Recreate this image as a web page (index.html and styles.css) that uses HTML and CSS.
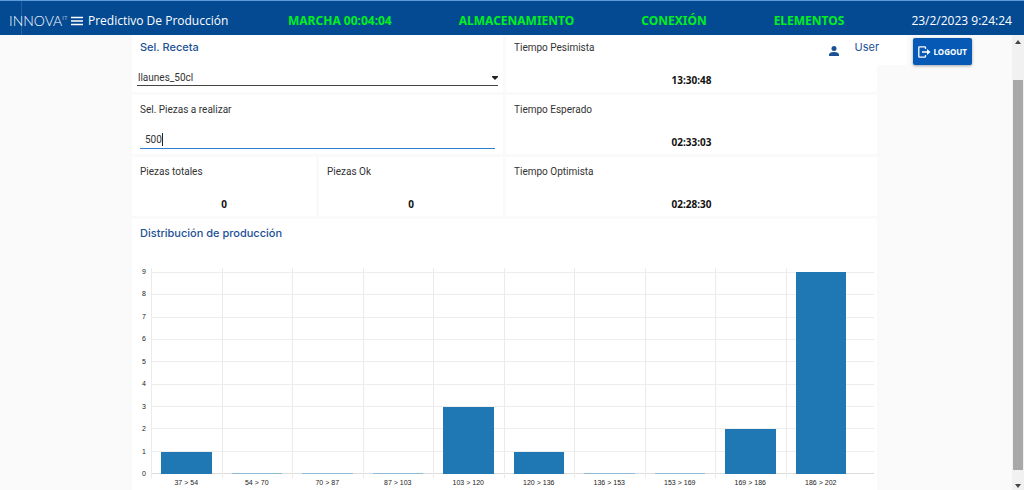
FILE: index.html
```html
<!DOCTYPE html>
<html lang="es">
<head>
<meta charset="utf-8">
<meta name="viewport" content="width=device-width, initial-scale=1">
<title>Predictivo De Producción</title>
<link rel="stylesheet" href="styles.css">
</head>
<body>
<header class="topbar">
  <div class="brand">
    <span class="logo">INNOVA<sup class="logo-sup">IT</sup></span>
    <button class="menu-button" type="button" aria-label="Menú">
      <svg class="menu-icon" viewBox="0 0 12 10" aria-hidden="true"><path d="M0 1.5H12M0 5H12M0 8.5H12" stroke="currentColor" stroke-width="1.3"/></svg>
    </button>
    <h1 class="app-title">Predictivo De Producción</h1>
  </div>
  <span class="status">MARCHA 00:04:04</span>
  <span class="status">ALMACENAMIENTO</span>
  <span class="status">CONEXIÓN</span>
  <span class="status">ELEMENTOS</span>
  <time class="clock">23/2/2023 9:24:24</time>
</header>
<div class="page">
  <main class="content">
    <div class="cards">
      <section class="card card-wide">
        <label class="heading" for="recipe">Sel. Receta</label>
        <div class="select-wrap">
          <select class="recipe" id="recipe"><option>llaunes_50cl</option></select>
          <svg class="select-arrow" viewBox="0 0 6 4" aria-hidden="true"><path d="M0 0H6V1L3 4L0 1Z"/></svg>
        </div>
      </section>
      <section class="card card-wide">
        <h2 class="label">Tiempo Pesimista</h2>
        <p class="value">13:30:48</p>
      </section>
      <section class="card card-wide">
        <label class="label" for="pieces">Sel. Piezas a realizar</label>
        <div class="input-wrap">
          <input class="pieces" id="pieces" type="text" value="500">
          <span class="caret"></span>
        </div>
      </section>
      <section class="card card-wide">
        <h2 class="label">Tiempo Esperado</h2>
        <p class="value">02:33:03</p>
      </section>
      <section class="card">
        <h2 class="label">Piezas totales</h2>
        <p class="value">0</p>
      </section>
      <section class="card">
        <h2 class="label">Piezas Ok</h2>
        <p class="value">0</p>
      </section>
      <section class="card card-wide">
        <h2 class="label">Tiempo Optimista</h2>
        <p class="value">02:28:30</p>
      </section>
      <section class="card card-full">
        <h2 class="heading">Distribución de producción</h2>
        <div class="chart">
          <div class="y-axis">
            <span>9</span><span>8</span><span>7</span><span>6</span><span>5</span><span>4</span><span>3</span><span>2</span><span>1</span><span>0</span>
          </div>
          <div class="rows">
            <i></i><i></i><i></i><i></i><i></i><i></i><i></i><i></i><i></i>
          </div>
          <div class="columns">
            <div class="column"><div class="bar" style="height:11.11%"></div></div>
            <div class="column"><div class="bar"></div></div>
            <div class="column"><div class="bar"></div></div>
            <div class="column"><div class="bar"></div></div>
            <div class="column"><div class="bar" style="height:33.33%"></div></div>
            <div class="column"><div class="bar" style="height:11.11%"></div></div>
            <div class="column"><div class="bar"></div></div>
            <div class="column"><div class="bar"></div></div>
            <div class="column"><div class="bar" style="height:22.22%"></div></div>
            <div class="column"><div class="bar" style="height:100%"></div></div>
          </div>
          <div class="x-axis">
            <span>37 &gt; 54</span><span>54 &gt; 70</span><span>70 &gt; 87</span><span>87 &gt; 103</span><span>103 &gt; 120</span><span>120 &gt; 136</span><span>136 &gt; 153</span><span>153 &gt; 169</span><span>169 &gt; 186</span><span>186 &gt; 202</span>
          </div>
        </div>
      </section>
    </div>
    <div class="account">
      <div class="user">
        <svg class="user-icon" viewBox="0 0 10 10" aria-hidden="true"><circle cx="5" cy="2.5" r="2.5"/><path d="M0 10V8.5C0 6.8 3 6 5 6S10 6.800 10 8.500V10Z"/></svg>
        <span class="user-name">User</span>
      </div>
      <button class="logout" type="button">
        <svg class="logout-icon" viewBox="0 0 13 12" aria-hidden="true"><path d="M7.500 3V1.600Q7.500 .8 6.700 .8H1.600Q.8 .8 .8 1.600V10.400Q.8 11.200 1.600 11.200H6.700Q7.500 11.200 7.500 10.400V9M4 6H10.500" fill="none" stroke="currentColor" stroke-width="1.3"/><path d="M9 3L12.500 6L9 9Z" fill="currentColor"/></svg>
        <span>LOGOUT</span>
      </button>
    </div>
  </main>
  <div class="scrollbar" aria-hidden="true">
    <svg class="scroll-arrow" viewBox="0 0 6 4"><path d="M0 4L3 0L6 4Z"/></svg>
    <div class="scroll-track"><div class="scroll-thumb"></div></div>
    <svg class="scroll-arrow" viewBox="0 0 6 4"><path d="M0 0L3 4L6 0Z"/></svg>
  </div>
</div>
</body>
</html>
```
FILE: styles.css
```css
* {
  box-sizing: border-box;
}

body {
  margin: 0;
  height: 100vh;
  display: flex;
  flex-direction: column;
  overflow: hidden;
  background: #fafafa;
  color: #333;
  font-family: "Noto Sans", "Open Sans", sans-serif;
  font-size: 10px;
}

h1,
h2,
p {
  margin: 0;
}

button,
input,
select {
  font: inherit;
  color: inherit;
}

.topbar {
  flex: none;
  height: 35px;
  padding: 5px 12px 0 9px;
  display: flex;
  align-items: center;
  justify-content: space-between;
  border-top: 1px solid #5b9bdc;
  background: linear-gradient(90deg, transparent 21px, #2560a3 21px, #2560a3 22px, transparent 22px) #034a93;
  color: #fff;
  white-space: nowrap;
}

.brand {
  flex: none;
  display: flex;
  align-items: center;
  width: 212px;
}

.logo {
  flex: none;
  width: 62px;
  font-family: Lato, sans-serif;
  font-size: 14px;
  font-weight: 300;
  line-height: 16px;
}

.logo-sup {
  font-size: 6px;
  line-height: 1;
}

.menu-button {
  display: flex;
  margin-right: 5px;
  padding: 0;
  border: 0;
  background: none;
}

.menu-icon {
  width: 12px;
  height: 10px;
}

.app-title {
  font-family: "Open Sans", sans-serif;
  font-size: 12px;
  font-weight: 400;
}

.status {
  color: #00f01e;
  font-size: 12px;
  font-weight: 700;
}

.clock {
  font-family: "Open Sans", sans-serif;
  font-size: 12px;
}

.page {
  flex: 1;
  min-height: 0;
  display: flex;
}

.content {
  position: relative;
  flex: 1;
  min-width: 0;
  overflow: hidden;
  padding: 0 135px 0 132px;
}

.cards {
  display: grid;
  grid-template-columns: repeat(4, 1fr);
  gap: 3px;
}

.card {
  height: 59px;
  padding: 8px 8px 0;
  background: #fff;
}

.card-wide {
  grid-column: span 2;
}

.card-wide:nth-child(-n+2) {
  height: 57px;
  padding-top: 6px;
}

.card-full {
  grid-column: 1 / -1;
  height: auto;
  padding: 6px 3px 10px 8px;
}

.label {
  display: block;
  font-family: Roboto, sans-serif;
  font-size: 10px;
  font-weight: 400;
  line-height: 14px;
}

.heading {
  display: block;
  color: #1c5196;
  font-family: Inter, sans-serif;
  font-size: 11px;
  font-weight: 500;
  line-height: 16px;
}

.card-wide .heading {
  line-height: 12px;
}

.value {
  margin-top: 18px;
  color: #111;
  font-size: 10px;
  font-weight: 700;
  line-height: 14px;
  text-align: center;
}

.select-wrap {
  display: grid;
  align-items: center;
  margin: 17px -3px 0;
  border-bottom: 1px solid #444;
}

.recipe,
.select-arrow {
  grid-area: 1 / 1;
}

.recipe {
  height: 15px;
  padding: 0 1px;
  border: 0;
  outline: 0;
  background: none;
  appearance: none;
  font-family: Roboto, sans-serif;
  font-size: 10px;
}

.select-arrow {
  justify-self: end;
  width: 6px;
  height: 4px;
  fill: #222;
}

.input-wrap {
  position: relative;
  margin-top: 13px;
}

.pieces {
  display: block;
  width: 100%;
  height: 19px;
  padding: 0 5px;
  border: 0;
  border-bottom: 1px solid #2f7fd0;
  outline: 0;
  background: none;
  font-family: Roboto, sans-serif;
  font-size: 10px;
}

.caret {
  position: absolute;
  left: 22px;
  top: 3px;
  width: 1px;
  height: 13px;
  background: #222;
}

.chart {
  display: grid;
  grid-template-columns: 11px 1fr;
  grid-template-rows: 202px auto;
  margin-top: 31px;
  color: #222;
  font-family: "Liberation Sans", Arial, sans-serif;
  font-size: 7px;
  line-height: 8px;
}

.y-axis {
  display: flex;
  flex-direction: column;
  justify-content: space-between;
  margin: -4px 5px -4px 0;
  text-align: right;
}

.rows {
  grid-area: 1 / 2;
  display: grid;
  grid-template-rows: repeat(9, 1fr);
  border-bottom: 1px solid #ddd;
}

.rows i {
  border-top: 1px solid #ededed;
}

.columns {
  grid-area: 1 / 2;
  display: grid;
  grid-template-columns: repeat(10, 1fr);
  margin: -4px 0 -4px;
  padding-right: 18px;
}

.column {
  display: flex;
  align-items: flex-end;
  padding: 4px 10px 4px 9px;
  border-left: 1px solid #ebebeb;
}

.bar {
  width: 100%;
  height: 1px;
  background: #1f77b4;
}

.bar:not([style]) {
  background: #8fbbdb;
}

.x-axis {
  grid-area: 2 / 2;
  display: grid;
  grid-template-columns: repeat(10, 1fr);
  padding: 5px 18px 0 0;
  text-align: center;
}

.account {
  position: absolute;
  top: 0;
  right: 40px;
  display: flex;
  align-items: flex-start;
  gap: 6px;
}

.user {
  display: flex;
  align-items: center;
  width: 78px;
  height: 30px;
  gap: 16px;
  background: #fff;
}

.user-icon {
  width: 10px;
  height: 10px;
  margin-top: 2px;
  fill: #1c5196;
}

.user-name {
  color: #1c5196;
  font-family: Inter, sans-serif;
  font-size: 11px;
  line-height: 14px;
  padding-bottom: 6px;
}

.logout {
  display: flex;
  align-items: center;
  gap: 3px;
  height: 27px;
  margin-top: 3px;
  padding: 0 5px;
  border: 0;
  border-radius: 2px;
  background: #0659b5;
  box-shadow: 0 1px 3px rgba(0, 0, 0, .35);
  color: #fff;
  font-size: 8px;
  font-weight: 700;
}

.logout-icon {
  width: 13px;
  height: 12px;
}

.scrollbar {
  flex: none;
  display: flex;
  flex-direction: column;
  align-items: center;
  width: 12px;
  padding: 5px 0 2px;
  background: #f1f1f1;
}

.scroll-arrow {
  width: 6px;
  height: 4px;
  fill: #444;
}

.scroll-track {
  flex: 1;
  align-self: stretch;
  padding: 36px 1px 14px;
}

.scroll-thumb {
  height: 100%;
  background: #a8a8a8;
}
```
